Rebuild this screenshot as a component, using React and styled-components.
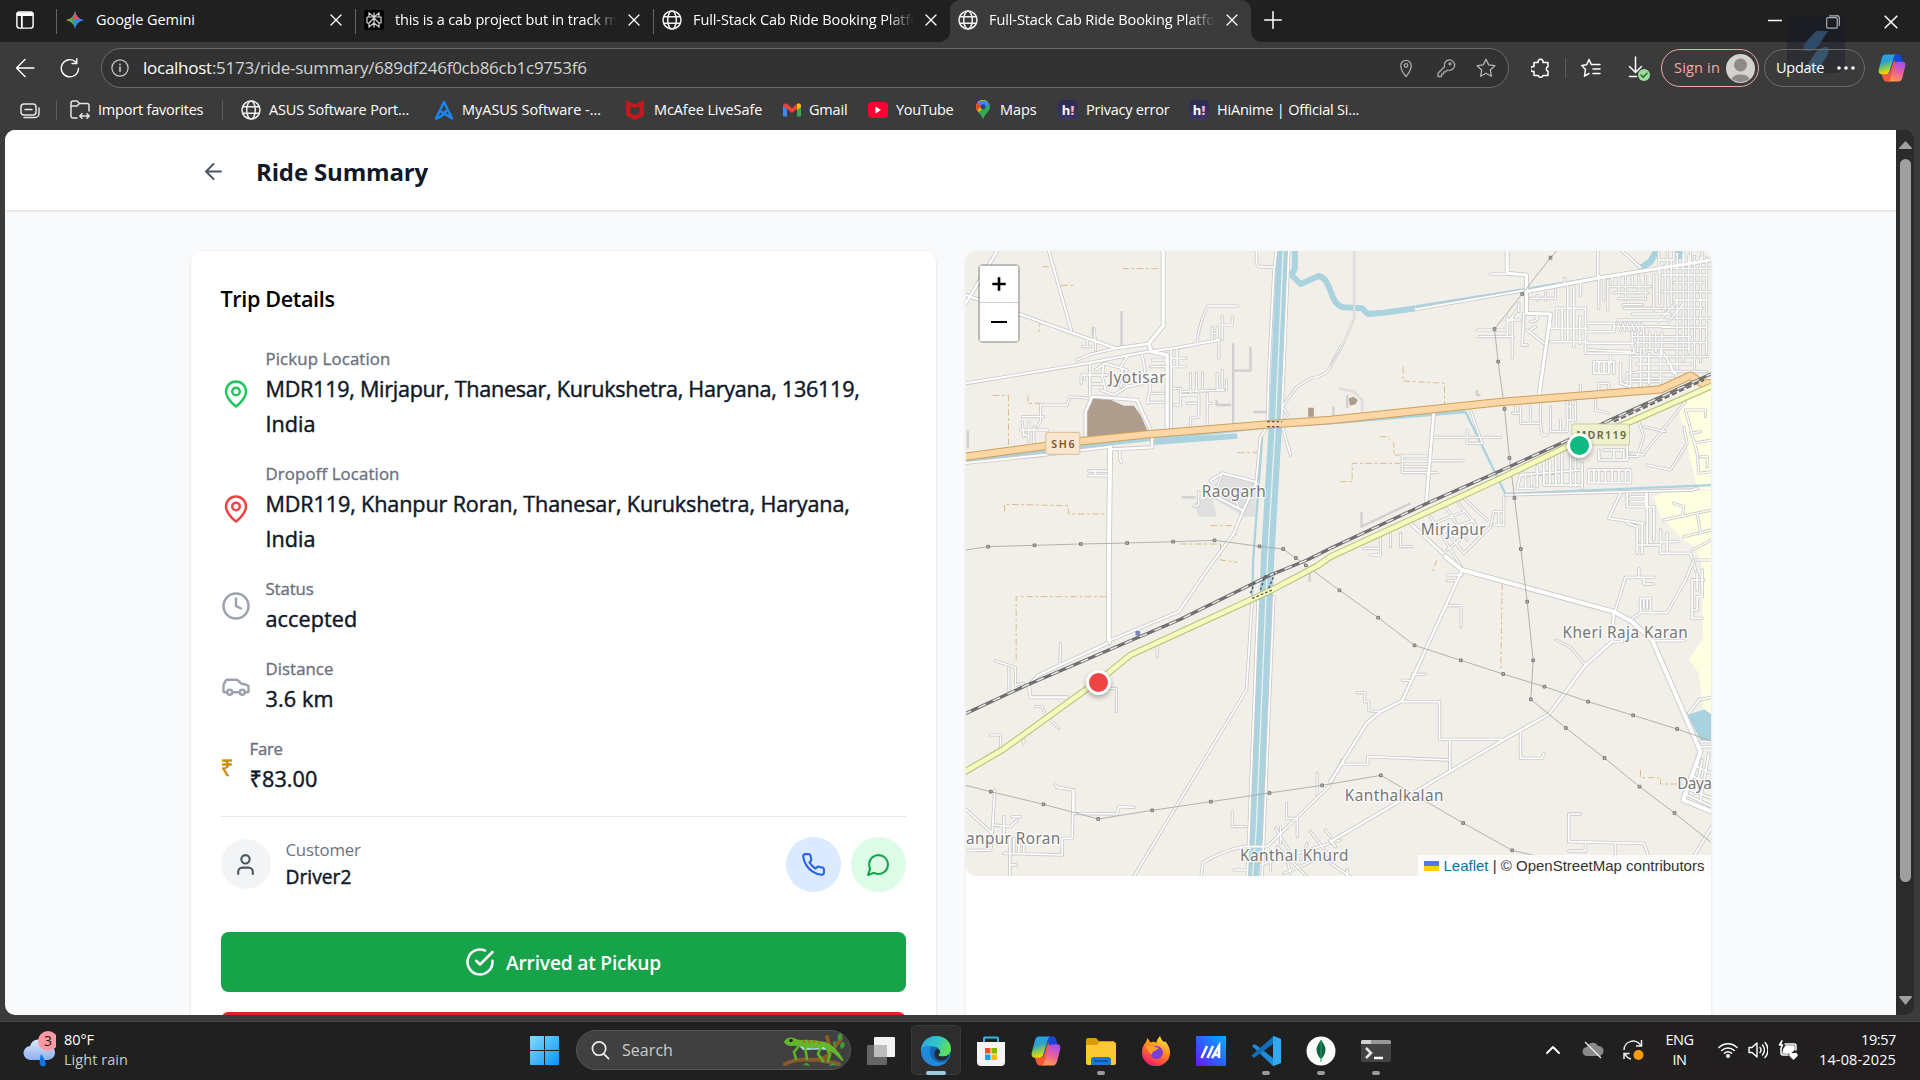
import React from "react";
import styled, { createGlobalStyle } from "styled-components";

const Global = createGlobalStyle`
  * { box-sizing: border-box; }
  html, body { margin: 0; padding: 0; overflow: hidden; }
  body { font-family: "Open Sans", "Noto Sans", sans-serif; background: #3b3b3b; }
  svg { display: block; flex: none; }
  h1, h2, p { margin: 0; }
`;

/* ---------- shared ---------- */

const T = styled.span`
  font-size: ${(p) => p.$s || 14.5}px;
  font-weight: ${(p) => p.$b || 400};
  color: ${(p) => p.$c || "#fff"};
  letter-spacing: ${(p) => p.$ls || 0}px;
  margin-bottom: ${(p) => (p.$mb === undefined ? 2 : p.$mb)}px;
  white-space: nowrap;
  flex: none;
`;

const Host = styled.span`
  color: #fff;
`;

const Gap = styled.i`
  flex: none;
  width: ${(p) => p.$w}px;
`;

const Stroke = ({ size = 20, w = 1.3, c = "#fff", box = 20, children }) => (
  <svg width={size} height={size} viewBox={`0 0 ${box} ${box}`} fill="none" stroke={c} strokeWidth={w} strokeLinecap="round" strokeLinejoin="round">
    {children}
  </svg>
);

const Globe = () => (
  <Stroke c="#f0f0f0" w={1.5}>
    <circle cx="10" cy="10" r="9" />
    <ellipse cx="10" cy="10" rx="4.3" ry="9" />
    <path d="M1.8 6.8h16.4M1.8 13.2h16.4" />
  </Stroke>
);

const Close = ({ size = 12 }) => (
  <Stroke size={size} box={12} w={1.3}>
    <path d="M1 1l10 10M11 1L1 11" />
  </Stroke>
);

const CopilotLogo = ({ size = 28, id }) => (
  <svg width={size} height={size} viewBox="0 0 28 28">
    <defs>
      <linearGradient id={id + "a"} x1="0" y1="0" x2="0.3" y2="1">
        <stop offset="0" stopColor="#1aa5f0" />
        <stop offset="0.45" stopColor="#2f9fd0" />
        <stop offset="0.7" stopColor="#7fc65a" />
        <stop offset="1" stopColor="#ffd400" />
      </linearGradient>
      <linearGradient id={id + "b"} x1="0.6" y1="0" x2="0.3" y2="1">
        <stop offset="0" stopColor="#a44df0" />
        <stop offset="0.5" stopColor="#e8609c" />
        <stop offset="1" stopColor="#ff9a4a" />
      </linearGradient>
    </defs>
    <path d="M16 0.5h4.5c1.8 0 2.5 1.5 3 3.2L24.8 8H19c-2 0-2.7 1-3.2 2.8L12 24l-2-5z" fill="#1a46d8" />
    <path d="M12 27.5H8c-1.8 0-2.5-1.5-3-3.2L3.4 20H9c2 0 2.7-1 3.2-2.8L16 6l2 4z" fill="#f25a38" />
    <path d="M7.5 0.5H18c-1.4.6-2 1.8-2.5 3.5l-4 13c-.6 2-1.5 3.2-3.6 3.2H3.5C.8 20.2.2 18 .8 15.5L3.5 5C4.2 2 5.2.5 7.5.5z" fill={`url(#${id}a)`} />
    <path d="M20.5 27.5H10c1.4-.6 2-1.8 2.5-3.5l4-13c.6-2 1.5-3.2 3.6-3.2h4.400c2.700 0 3.300 2.200 2.700 4.700L24.500 23c-.7 3-1.700 4.500-4 4.500z" fill={`url(#${id}b)`} />
  </svg>
);

/* ---------- browser chrome ---------- */

const Screen = styled.div`
  width: 1920px;
  height: 1080px;
  display: flex;
  flex-direction: column;
  background: #3b3b3b;
  overflow: hidden;
  position: relative;
`;

const TabStrip = styled.div`
  height: 42px;
  flex: none;
  display: flex;
  align-items: stretch;
  background: #202020;
`;

const StripCell = styled.div`
  width: ${(p) => p.$w}px;
  padding: ${(p) => p.$p || 0};
  flex: none;
  display: flex;
  align-items: center;
`;

const Tab = styled.div`
  width: ${(p) => p.$w || 298}px;
  flex: none;
  display: flex;
  align-items: center;
  padding: 0 ${(p) => (p.$active ? 13 : 13)}px 2px 8px;
  background: ${(p) => (p.$active ? "#3b3b3b" : "transparent")};
  border-radius: 10px 10px 0 0;
  gap: 11px;
  position: relative;
  ${(p) =>
    p.$active &&
    `&::before, &::after { content: ""; position: absolute; bottom: 0; width: 10px; height: 10px; }
     &::before { left: -10px; background: radial-gradient(circle at 0 0, transparent 9.5px, #3b3b3b 10px); }
     &::after { right: -10px; background: radial-gradient(circle at 100% 0, transparent 9.5px, #3b3b3b 10px); }`}
`;

const TabTitle = styled.div`
  flex: 1;
  min-width: 0;
  overflow: hidden;
  display: flex;
  mask-image: ${(p) => (p.$fade ? "linear-gradient(90deg, #000 calc(100% - 26px), transparent)" : "none")};
`;

const VRule = styled.div`
  width: 1px;
  flex: none;
  height: ${(p) => p.$h || 25}px;
  align-self: center;
  background: ${(p) => p.$c || "#666"};
`;

const Toolbar = styled.div`
  height: 52px;
  flex: none;
  display: flex;
  align-items: center;
  padding-left: 15px;
  position: relative;
  z-index: 1;
`;

const AddressBar = styled.div`
  width: 1408px;
  height: 40px;
  flex: none;
  display: flex;
  align-items: center;
  padding: 0 12px 0 9px;
  border: 1.25px solid #6c6c6c;
  border-radius: 20px;
  background: #323232;
`;

const Grow = styled.div`
  flex: 1;
`;

const Pill = styled.div`
  height: 38px;
  width: ${(p) => p.$w}px;
  flex: none;
  display: flex;
  align-items: center;
  padding: ${(p) => p.$p};
  border: ${(p) => p.$bw || 1}px solid ${(p) => p.$c};
  border-radius: 19px;
`;

const Bookmarks = styled.div`
  height: 36px;
  flex: none;
  display: flex;
  align-items: center;
  padding: 0 0 4px 20px;
`;

const Mark = styled.div`
  display: flex;
  align-items: center;
  gap: ${(p) => p.$g || 8}px;
  width: ${(p) => p.$w}px;
  flex: none;
`;

const HiBadge = styled.div`
  width: 20px;
  height: 20px;
  border-radius: 5px;
  background: linear-gradient(#2b2a4e, #3a3768);
  display: flex;
  align-items: center;
  justify-content: center;
  font: 700 13px/1 "Open Sans", sans-serif;
  color: #fff;
  b { color: #f5b6dc; }
`;

const Floating = styled.div`
  position: absolute;
  left: 1787px;
  top: 15px;
  width: 58px;
  height: 58px;
  border-radius: 10px;
  background: rgba(20, 25, 42, 0.36);
`;

const Viewport = styled.div`
  height: 885px;
  flex: none;
  margin: 0 6px 6px 5px;
  display: flex;
  border-radius: 10px;
  overflow: hidden;
  background: #2b2b2b;
`;

const ScrollTrack = styled.div`
  width: 18px;
  display: flex;
  flex-direction: column;
  align-items: center;
  padding-top: 11px;
  background: #2b2b2b;
`;

const Thumb = styled.div`
  width: 11px;
  height: 723px;
  margin: 10px 0 114px;
  border-radius: 6px;
  background: #9f9f9f;
`;

/* ---------- page ---------- */

const Page = styled.div`
  width: 1891px;
  height: 885px;
  overflow: hidden;
  background: #f9fafb;
`;

const PageHeader = styled.header`
  height: 80px;
  display: flex;
  align-items: center;
  padding: 2px 0 0 200px;
  gap: 34px;
  background: #fff;
  box-shadow: 0 1.25px 2.5px rgba(0, 0, 0, 0.14);
  position: relative;
`;

const Title = styled.h1`
  font-size: 24px;
  line-height: 35px;
  font-weight: 700;
  color: #111827;
  letter-spacing: ${(p) => p.$ls || 0}px;
`;

const Columns = styled.main`
  display: grid;
  grid-template-columns: 745px 745px;
  gap: 30px;
  padding: 41px 0 0 185.5px;
  height: 900px;
`;

const Card = styled.section`
  background: #fff;
  border-radius: 10px;
  box-shadow: 0 1.25px 3px rgba(0, 0, 0, 0.12);
  padding: ${(p) => p.$p || 0};
  min-width: 0;
`;

const Heading = styled.h2`
  font-size: 21.6px;
  line-height: 35px;
  font-weight: 600;
  color: #000;
  letter-spacing: ${(p) => p.$ls || 0}px;
  margin-bottom: 30px;
`;

const Details = styled.div`
  display: flex;
  flex-direction: column;
  gap: 20px;
  padding-bottom: 20px;
  border-bottom: 1px solid #e5e7eb;
`;

const Detail = styled.div`
  display: flex;
  align-items: center;
  gap: 15px;
`;

const Caption = styled.p`
  font-size: 16.8px;
  line-height: 24px;
  padding-top: 1px;
  color: #6b7280;
  letter-spacing: ${(p) => p.$ls || 0}px;
  -webkit-text-stroke: ${(p) => (p.$light ? 0 : 0.35)}px #6b7280;
`;

const Value = styled.p`
  font-size: ${(p) => p.$s || 21.6}px;
  line-height: ${(p) => p.$lh || 35}px;
  color: #111827;
  letter-spacing: ${(p) => p.$ls || 0}px;
  white-space: nowrap;
  -webkit-text-stroke: 0.45px #111827;
`;

const Rupee = styled.span`
  width: 14px;
  font-size: 23px;
  line-height: 35px;
  padding-top: 2px;
  color: #ca8a04;
  -webkit-text-stroke: 0.4px #ca8a04;
`;

const Person = styled.div`
  display: flex;
  align-items: center;
  height: 95px;
  padding-bottom: 1px;
`;

const Round = styled.div`
  width: ${(p) => p.$d}px;
  height: ${(p) => p.$d}px;
  flex: none;
  border-radius: 50%;
  display: flex;
  align-items: center;
  justify-content: center;
  margin-left: ${(p) => p.$ml || 0}px;
  background: ${(p) => p.$bg};
`;

const PersonText = styled.div`
  flex: 1;
  padding: 1px 0 0 15px;
`;

const Action = styled.div`
  height: 60px;
  display: flex;
  align-items: center;
  justify-content: center;
  gap: 11px;
  margin-top: 20px;
  border-radius: 7.5px;
  background: ${(p) => p.$bg};
`;

const MapFrame = styled.div`
  height: 625px;
  border-radius: 10px;
  overflow: hidden;
  position: relative;
  background: #f2efe9;
`;

const ZoomBox = styled.div`
  position: absolute;
  left: 12.5px;
  top: 12.5px;
  width: 42px;
  border: 2.5px solid rgba(0, 0, 0, 0.22);
  border-radius: 5px;
  background-clip: padding-box;
`;

const ZoomButton = styled.div`
  height: 37.5px;
  display: flex;
  align-items: center;
  justify-content: center;
  background: #fff;
  border-bottom: ${(p) => (p.$line ? "1px solid #ccc" : 0)};
`;

const Dot = styled.div`
  position: absolute;
  left: ${(p) => p.$x}px;
  top: ${(p) => p.$y}px;
  width: 25px;
  height: 25px;
  margin: -12.5px;
  border-radius: 50%;
  border: 3px solid #fff;
  background: ${(p) => p.$c};
  box-shadow: 0 2.5px 5px rgba(0, 0, 0, 0.3);
`;

const Attribution = styled.div`
  position: absolute;
  right: 0;
  bottom: 0;
  width: 293px;
  height: 21px;
  padding-left: 6px;
  display: flex;
  align-items: center;
  gap: 5px;
  font: 15px/21px "Liberation Sans", Arial, sans-serif;
  color: #333;
  background: rgba(255, 255, 255, 0.8);
  white-space: nowrap;
  b { font-weight: 400; color: #0078a8; }
`;

const Flag = styled.span`
  width: 15px;
  height: 10px;
  background: linear-gradient(#4c7be1 50%, #ffd500 50%);
`;

/* ---------- map data: [fill width, path] ---------- */

const roads = {
  nw: [
    [10, "M608 30V258L565 310L572 335L620 345V578"],
    [6, "M16 430L380 370L560 335L640 325L775 300"],
    [7, "M16 165L465 325L560 312"],
    [6, "M265 33L332 270"], [7, "M110 33L16 190"],
    [5, "M350 360L390 343L465 325"],
    [7, "M375 590V515L395 470L530 480L545 515L575 580V622L450 628"],
    [6, "M16 669L240 646L450 620"],
    [12, "M449 622L445 960V1208"],
    [4, "M710 310Q712 270 728 230L742 198H832"],
    [4, "M755 298V262M770 298V262M755 280H770M785 298V230M785 255H815V230M775 300V355"],
    [5, "M388 370V470M388 405H440M388 432H430M405 390L435 370L500 390L480 440M420 450L460 465L500 440M545 345L555 400L570 440L560 490M500 440L545 430M500 440L480 380L500 350M430 370L425 410L435 450"],
    [4, "M575 360H615M570 380H620M570 460H610M560 487H610M380 320V300M365 320H390M405 330V305L400 265"],
    [4, "M362 405V430M362 405H385M372 418V405"],
    [4, "M320 495L328 470L385 475M320 495H240V545L230 560M180 570H262M185 530H250M185 545L190 590M205 545V605M220 560V610M188 580L205 590"],
    [5, "M632 330V575M632 355H675M632 380H675M650 380V330"],
    [4, "M632 445H660V495H640M660 465H715V530L690 535V575M690 460V400M708 455V400M726 455V400M660 455L790 450M770 450V400M785 450V390M798 450V420M740 460V560M740 490H752M680 490H715"],
    [5, "M947 33L940 100L925 390L920 560L900 590L887 725M888 33V70L895 80L940 82"],
    [5, "M985 33L963 550L970 575L990 645"],
    [4, "M963 550L985 530L965 500L1010 440L1050 415Q1095 410 1110 380L1140 320"],
    [6, "M750 722L785 700L888 726L848 812L815 795L755 765L735 760M848 812L820 880L740 990L655 1115L440 1205"],
    [4, "M750 722L770 750L860 765M785 700L770 745M820 760L835 805M700 800L715 795V755"],
    [5, "M385 693H445M385 707H440M403 693V707M478 628V655L483 668"],
  ],
  ne: [
    [9, "M530 33V100L588 105V220L660 222L655 260L625 470"],
    [9, "M585 155L800 115L1143 60"],
    [5, "M255 208L590 150"], [5, "M802 33V115M875 33L930 82"],
    [5, "M580 220L575 315H590M590 270L640 310M600 245Q625 245 620 225M600 270L615 260"],
    [5, "M660 222V265H770M678 205V265M695 205V300M712 140V300M730 205V320M748 230V310M765 205V340M678 205H765M660 305H770M730 140V205M750 130V165"],
    [5, "M770 250H850V275H770M770 340H910V325M770 330L900 335M770 310L910 310"],
    [8, "M310 515L287 790"],
    [7, "M240 850L385 985"],
    [4, "M310 592H510M410 570V610H455M420 510L455 610M215 645V698M215 648H290M215 663H290M215 680H290M215 698H320M300 662H398"],
    [4, "M300 830L395 985M345 800L410 900M380 785L440 860M400 775L470 840M345 870L400 940L480 860L490 815H520M490 855H520V770M320 880L430 840M310 850L400 815M350 930L410 880M505 855V815M100 925H150V945H120M150 890V945M180 880V920M210 880V920H245"],
    [4, "M545 520H570V550H630V490M555 500V520M570 500V550M600 500V550M660 500V575H710V485M690 540V575M735 485V540H710M710 500H735M720 485V540M630 550L635 585H650M795 475V510L835 520M805 430V455M805 430H835V450M750 435V470"],
    [5, "M560 745L570 705L755 690M585 745V700M603 735V700M620 740V680M640 735V650M658 735V660M676 735V650M694 735V640M720 740V640M735 740V650M755 745V670M565 745H610M640 735H755"],
    [5, "M775 690H900V728H775ZM790 690V728M805 690V728M825 690V728M845 690V728M865 690V728M885 690V728M805 630V660H890V615M820 630H880V660M850 630V660"],
    [4, "M925 545L940 590L920 650H890M940 560L1005 575M1065 485L940 640M1070 610L1020 690L950 675M1060 560L1070 610M900 640L940 645"],
    [5, "M525 765L1085 750L1100 745M870 760L835 835L940 850M890 760V800H945V760M900 770H945M900 785H945M950 760V910M935 850V940M950 800H970V900M990 870V940H1080L1095 990M920 860V940M920 915H990M990 905H1040M1010 880V940M890 850L920 860"],
    [4, "M1065 510H1125V530M1065 510L1100 640L1105 700L1143 695M1080 580L1110 575M1090 610L1143 600M1110 650H1130V680M1000 840L1143 810M1030 790L1060 800L1055 830M1100 820L1110 880M1060 890L1143 870M1085 930L1143 900M1100 960H1143"],
    [5, "M790 365V400H830M790 365H850V400M805 365V395M820 365V395M835 365V400M840 345V370M870 370V430L900 440M900 350V445M930 330V440M955 340V430M990 330V430M1000 340L1040 410M1020 380L1030 400"],
    [4, "M440 270H525M445 290H550M530 230V290M545 230V355M530 240H570M565 190V215M530 250L560 210M600 175H675V150M620 165V180M645 160V180M480 102H530M703 115V130"],
  ],
  sw: [
    [7, "M440 250L235 345L205 375L210 412H320"],
    [4, "M105 303L165 322V375L190 370M145 322V392M300 250L298 315M225 440H245L255 465L295 505M90 525H120V565M190 530V550M590 260V290M445 385H468V455"],
    [5, "M875 120L858 390L520 950"],
    [5, "M893 120L860 950M940 110L905 950"],
    [5, "M18 750L95 820L103 690M100 795L150 800L170 780M340 760L470 762L475 740L520 742M340 760V690L290 682L285 675M338 690L335 835H305V885L130 880M18 872L90 870L95 840M148 950V830M130 770V830M155 770H180M160 835V880M175 840V880M190 850V880M148 915H168"],
    [5, "M722 950L727 908Q790 870 850 860L920 860L1105 680L1145 600"],
    [4, "M815 755V800H855M825 800H830M978 730V775H1010V830M960 800V850M945 805L985 870M900 915L1140 840M950 860L1040 950M975 880L990 940M1050 815L1100 880L1110 900M1040 850L1020 900M1095 810L1110 830M930 870V930M970 940L1110 880M1070 640V705M820 930H860"],
  ],
  se: [
    [12, "M345 -10L395 30L850 155L905 185L965 240L1110 575L1058 720L1143 755"],
    [7, "M395 30L215 422L150 455L108 490L0 665"],
    [7, "M850 155L845 245L765 315L655 463L515 542L0 845"],
    [5, "M215 425H327V538H515M33 613H112V590L358 600M358 540V632M570 517V595H635L640 580"],
    [4, "M350 45H395M350 62H375M350 137H392V200M215 360L240 362M245 343H285M80 398H103V425H115V452L150 455M677 240L720 262L765 315"],
    [5, "M855 150L885 52H970M925 25V52M940 55V72H968M905 175L930 158H1010L1065 60L1090 0M1085 60V175H1115M1085 60H1120M1085 150H1100V110H1115V30M1100 40V90M930 155V115H960V158M940 120V145M950 120V145M975 242H1062M845 245H875V235M1075 460L1105 420L1143 412"],
    [5, "M1143 545H1110M1143 560H1110M1100 620L1143 640M1090 650L1143 670M1080 690L1143 715M1115 600L1095 700M1135 580L1110 720M1060 700L1143 740"],
    [5, "M750 762H715V845L940 850L958 900L990 945M765 850V873H715M855 850V900M0 910L60 950M50 930V950M0 840L15 860"],
    [6, "M1143 800L1055 950"],
  ],
};

/* streets of the dense town quarter in the north-east corner */
const town = [];
[140, 158, 176, 194].forEach((y, i) => town.push([4, `M${835 + i * 14} ${y}H${960 - i * 8}`]));
[845, 865, 885, 905, 925, 945].forEach((x, i) => town.push([4, `M${x} 108V${135 + (i % 3) * 22}`]));
[[805, 105, 205], [820, 110, 180], [832, 120, 210]].forEach(([x, a, b]) => town.push([4, `M${x} ${a}V${b}`]));
[862, 876, 890, 904, 918, 932].forEach((x) => town.push([4, `M${x} 250L${x + 8} 272`]));
town.push([4, "M850 260H1020M860 240H1010M905 222H1020M880 205H990"]);
[970, 988, 1004, 1022].forEach((x, i) => town.push([4, `M${x} ${105 - i * 15}V${210 - (i % 2) * 20}`]));
[905, 922, 940, 958, 976, 994].forEach((x, i) => town.push([4, `M${x} 275V${325 + (i % 3) * 10}`]));
[290, 308, 326, 350, 372, 395, 415].forEach((y, i) => town.push([4, `M${905 + (i % 3) * 12} ${y}H${1080 + (i % 2) * 50}`]));
[1040, 1058, 1075, 1092, 1110, 1128].forEach((x, i) => town.push([4, `M${x} ${40 + i * 3}V${390 - (i % 3) * 25}`]));
[85, 105, 128, 155, 180, 205, 235, 262].forEach((y, i) => town.push([4, `M${1030 - (i % 2) * 35} ${y}H${1143 - (i % 3) * 14}`]));
town.push([4, "M1015 245L1055 195M985 245L1040 185M985 60H1030V33M985 33V100M1010 33V85M1060 33V70M1080 33V70M1115 33V65M880 425H990M890 435V400L930 395"]);

const quadrants = [
  ["", roads.nw],
  ["translate(1110 0)", [...town, ...roads.ne]],
  ["translate(0 960)", roads.sw],
  ["translate(1110 960)", roads.se],
];

const tracks = [
  "M245 80H270M485 86H598M302 136H340M240 240L235 278M97 466H144V620M202 466V490H240M832 638H890M132 815V793L322 797L325 822H440M750 857H820M815 883H830M660 912H780M780 912V960L830 967",
  "M1328 380V423L1452 430V495M1258 590H1280L1300 610V645H1320M1138 725H1175V670H1325M1428 960L1415 1000",
  "M167 1260V1070L440 1070M1625 1030L1621 1285M2040 1590V1613H2100V1632H2165",
];

const SH6 = "M16 650L365 603L560 583L925 553L1110 540L1610 487L2100 448L2190 407L2225 430L2260 430";
const MDR = "M10 1597L125 1530L430 1310L510 1245L930 1052L1070 978L1110 950L1620 715L1830 615L2010 545L2260 435";
const RAIL = "M10 1423L200 1335L660 1138L930 1005L1040 960L1110 925L1400 790L1610 697L1830 597L1960 535L2260 398";

const power = [
  [[16, 930], [83, 920], [222, 916], [361, 912], [500, 909], [638, 905], [762, 901], [897, 919], [968, 927], [1006, 954], [1036, 976], [1137, 1051], [1253, 1133], [1362, 1216], [1501, 1261], [1628, 1302], [1752, 1340], [1883, 1385], [2018, 1426], [2150, 1467], [2258, 1505]],
  [[1788, 33], [1770, 53], [1685, 162], [1602, 267], [1613, 365], [1632, 507], [1647, 654], [1662, 774], [1681, 927], [1700, 1085], [1718, 1261], [1711, 1378], [1816, 1464], [1932, 1554], [2037, 1640], [2142, 1719], [2258, 1812]],
  [[16, 1636], [91, 1655], [249, 1693], [413, 1737], [575, 1711], [751, 1685], [927, 1659], [1085, 1636], [1261, 1606], [1508, 1749], [1655, 1831], [1760, 1856]],
];

const places = [
  ["Jyotisar", 532, 428, 170], ["Raogarh", 822, 772, 192], ["Mirjapur", 1480, 885, 194],
  ["Kheri Raja Karan", 1996, 1194, 376], ["Kanthalkalan", 1303, 1683, 296], ["Kanthal Khurd", 1003, 1862, 325],
  ["anpur Roran", 160, 1811, 283], ["Daya", 2204, 1646, 104],
];

const RideMap = () => (
  <svg width="745" height="625" viewBox="16.5 33 2235 1875" fill="none" strokeLinejoin="round">
    <rect width="2260" height="1920" fill="#f2efe9" />
    <path d="M2170 480L2260 435V750L2210 745L2155 510ZM2080 772L2110 757L2260 750V1420L2228 1412L2215 1300L2185 1258L2228 1195L2222 960L2200 920L2160 890L2100 830Z" fill="#feffe0" />
    <path d="M780 705L885 730V830H850L750 770ZM700 790L755 765L768 830H715Z" fill="#e0dfdf" />
    <path d="M400 467L440 475L490 497H520L540 525L562 575L378 592L375 515ZM1043 503H1060V530H1043ZM1165 475L1180 470L1192 480L1185 493L1168 497Z" fill="#ae9c8d" />
    <path d="M2180 1425L2232 1408L2260 1430V1505L2220 1500Z" fill="#aad3df" />
    <g stroke="#aad3df">
      <path d="M968 30L945 550L921 960L887 1770L876 1910" strokeWidth="40" />
      <path d="M1003 30V85L993 105L1020 132L1075 108C1115 115 1105 195 1150 202L1205 205L1222 222L1270 218L1365 205" strokeWidth="18" />
      <path d="M1365 200L1700 147L2040 92" strokeWidth="9" />
      <path d="M2040 85L2070 65L2090 30M2155 30V58" strokeWidth="20" />
      <path d="M16 662L440 612L930 560L1120 548L1515 515" strokeWidth="10" />
      <path d="M570 607L830 588" strokeWidth="17" />
      <path d="M1515 515L1600 690L1635 762L2260 735" strokeWidth="7" />
      <path d="M905 590L878 960L875 1080" strokeWidth="7" />
    </g>
    <path d="M968 30L945 550L921 960L887 1770L876 1910" stroke="#e8efec" strokeWidth="4" />
    {tracks.map((d) => <path key={d} d={d} stroke="#d8bf8c" strokeWidth="3" strokeDasharray="20 8 8 8" />)}
    {quadrants.map(([t, list], q) => (
      <g key={q} transform={t}>
        <g stroke="#c9c9c9" strokeLinecap="round">{list.map(([w, d], i) => <path key={i} d={d} strokeWidth={w + 5} />)}</g>
        <g stroke="#fff" strokeLinecap="round">{list.map(([w, d], i) => <path key={i} d={d} strokeWidth={w} />)}</g>
      </g>
    ))}
    <g stroke="#cfcfcf" strokeWidth="7">
      <path d="M1181 30V235L1145 320L1110 380M483 213V318M397 262V290M818 310V560M820 392H870V320M768 480V495H812M878 516H920M663 772H705M22 572V625M1203 815V860L1350 790M1135 445L1180 455L1205 480V515M1160 505V465M1119 500V530M1549 450V465H1560M1047 980V1025" />
      <path d="M1181 30V235L1145 320L1110 380M1135 445L1180 455L1205 480V515" stroke="#f4f4f4" strokeWidth="2.5" />
    </g>
    {power.map((line, i) => (
      <g key={i}>
        <polyline points={line.join(" ")} stroke="#a5a5a2" strokeWidth="2.5" />
        {line.slice(1, -1).map(([x, y]) => <rect key={x} x={x - 4} y={y - 4} width="8" height="8" fill="#bbb" stroke="#777" strokeWidth="3" />)}
      </g>
    ))}
    <path d={SH6} stroke="#caa15e" strokeWidth="25" />
    <path d={SH6} stroke="#fcd6a4" strokeWidth="19" />
    <path d={RAIL} stroke="#707070" strokeWidth="10" />
    <path d={RAIL} stroke="#e6e6e6" strokeWidth="4.5" strokeDasharray="24 24" />
    <path d="M1960 545L2230 420" stroke="#666" strokeWidth="6" strokeDasharray="16 8" />
    <path d={MDR} stroke="#b9bd78" strokeWidth="20" />
    <path d={MDR} stroke="#f7fabf" strokeWidth="14" />
    <path d="M870 1060L885 1020M900 1050L915 1005M925 1045L945 995M875 1075L940 1048M920 545H965M920 560H960" stroke="#555" strokeWidth="4" strokeDasharray="8 6" />
    <path d="M525 1173H539V1187H525Z" fill="#7d86b5" />
    <g fontFamily="'Noto Sans', sans-serif" fontSize="46" textAnchor="middle" fill="#777" stroke="#fff" strokeWidth="8" paintOrder="stroke">
      {places.map(([n, x, y, w]) => <text key={n} x={x - 2} y={y} textLength={w} strokeOpacity="0.75">{n}</text>)}
    </g>
    <rect x="256" y="577" width="102" height="66" rx="6" fill="#f8e6cf" stroke="#dcbb92" strokeWidth="3" />
    <rect x="1834" y="552" width="173" height="63" rx="6" fill="#eff0cf" stroke="#c9cc98" strokeWidth="3" />
    <g fontFamily="'Noto Sans', sans-serif" fontSize="32" fontWeight="600" textAnchor="middle">
      <text x="307" y="625" textLength="70" fill="#7c5429">SH6</text>
      <text x="1922" y="597" textLength="150" fill="#65693c">MDR119</text>
    </g>
  </svg>
);

/* ---------- taskbar ---------- */

const Taskbar = styled.div`
  height: 59px;
  flex: none;
  display: flex;
  align-items: center;
  padding-bottom: 2px;
  background: linear-gradient(90deg, #202020 0 70%, #231f21);
  border-top: 1px solid #444;
`;

const Weather = styled.div`
  width: 530px;
  padding-left: 23px;
  display: flex;
  align-items: center;
  gap: 8px;
`;

const Stack = styled.div`
  display: flex;
  flex-direction: column;
  align-items: ${(p) => p.$a || "flex-start"};
  width: ${(p) => (p.$w ? p.$w + "px" : "auto")};
  line-height: 20px;
`;

const SearchBox = styled.div`
  width: 275px;
  height: 40px;
  margin: 0 4.5px 0 17px;
  padding: 0 3px 0 14px;
  display: flex;
  align-items: center;
  border: 1px solid #565656;
  border-radius: 20px;
  background: #404040;
`;

const AppSlot = styled.div`
  width: 50px;
  height: 50px;
  margin-right: 5px;
  flex: none;
  border-radius: 5px;
  display: flex;
  flex-direction: column;
  align-items: center;
  padding-top: 10px;
  gap: 5px;
  background: ${(p) => (p.$on ? "#2d2d2d" : "transparent")};
  border: 1px solid ${(p) => (p.$on ? "#393939" : "transparent")};
  &::after {
    content: "";
    flex: none;
    width: ${(p) => (p.$on ? 20 : p.$run ? 8 : 0)}px;
    height: 4px;
    border-radius: 2px;
    background: ${(p) => (p.$on ? "#9fc9dd" : "#9a9a9a")};
  }
`;

const Tray = styled.div`
  flex: 1;
  display: flex;
  align-items: center;
`;

const AppIcon = ({ children }) => <svg width="30" height="30" viewBox="0 0 30 30">{children}</svg>;

const Gecko = () => (
  <svg width="64" height="34" viewBox="0 0 64 34">
    <path d="M2 31Q14 25 28 27Q44 27 48 18L44 4M50 16L58 6M36 27L56 31" stroke="#8a5a2b" strokeWidth="4" fill="none" strokeLinecap="round" />
    <path d="M56 8Q52 2 58 0Q62 5 56 8ZM58 16Q55 9 61 9Q64 14 58 16ZM20 32Q24 27 27 33ZM46 33Q50 27 54 32ZM52 14Q47 8 53 8Z" fill="#3f9a3a" />
    <path d="M1 9Q4 3 11 5Q14 7 18 7Q28 6 42 9Q52 12 60 26Q62 31 56 25Q48 16 38 15L20 15Q14 12 9 13Q3 13 1 9Z" fill="#62b82a" />
    <path d="M16 13Q28 17 40 14L50 19Q44 16 38 16.500L20 17Z" fill="#a7dcf0" />
    <path d="M16 13L11 19L13 26M22 14L24 26M38 14L35 21L40 28M43 14L47 22L45 28" stroke="#5cb526" strokeWidth="2.6" fill="none" strokeLinecap="round" />
    <path d="M20 8.500h2M25 8.500h2M30 8.500h2M35 9.500h2" stroke="#d6502a" strokeWidth="2" />
    <circle cx="8" cy="7.500" r="1.800" fill="#222" />
  </svg>
);

const pin = <><path d="M20 10c0 6-8 12-8 12s-8-6-8-12a8 8 0 0 1 16 0Z" /><circle cx="12" cy="10" r="3" /></>;

const items = [
  { l: "Pickup Location", ls: 0.14, v: ["MDR119, Mirjapur, Thanesar, Kurukshetra, Haryana, 136119,", "India"], vs: [-0.28, 0], c: "#22c55e", icon: pin },
  { l: "Dropoff Location", ls: 0.13, v: ["MDR119, Khanpur Roran, Thanesar, Kurukshetra, Haryana,", "India"], vs: [-0.13, 0], c: "#ef4444", icon: pin },
  { l: "Status", ls: -0.1, v: ["accepted"], vs: [0.1], c: "#9ca3af", icon: <><circle cx="12" cy="12" r="10" /><path d="M12 6v6l4 2" /></> },
  { l: "Distance", ls: 0.06, v: ["3.6 km"], vs: [0.15], c: "#9ca3af", icon: <><path d="M19 17h2c.6 0 1-.4 1-1v-3c0-.9-.7-1.7-1.5-1.9C18.7 10.6 16 10 16 10s-1.3-1.4-2.2-2.3c-.5-.4-1.1-.7-1.8-.7H5c-.6 0-1.1.4-1.4.9l-1.4 2.9A3.7 3.7 0 0 0 2 12v4c0 .6.4 1 1 1h2" /><circle cx="7" cy="17" r="2" /><path d="M9 17h6" /><circle cx="17" cy="17" r="2" /></> },
];

export default function App() {
  return (
    <Screen>
      <Global />
      <TabStrip>
        <StripCell $w={56} $p="0 0 2px 16px">
          <Stroke size={18} w={1.6}><rect x="1" y="1" width="18" height="18" rx="3" /><path d="M2 4.5h16M6.500 6v12" strokeWidth="2" /><path d="M2 3h16" strokeWidth="3" /></Stroke>
        </StripCell>
        <VRule />
        <Tab>
          <svg width="20" height="20" viewBox="0 0 20 20">
            <defs><linearGradient id="gm" x1="0" y1="0.5" x2="1" y2="0.5"><stop offset="0" stopColor="#f9c20a" /><stop offset="0.35" stopColor="#39a96b" /><stop offset="0.55" stopColor="#3186ff" /><stop offset="1" stopColor="#3d8bff" /></linearGradient></defs>
            <path d="M10 1Q11.5 8.5 19 10Q11.5 11.5 10 19Q8.5 11.5 1 10Q8.5 8.5 10 1Z" fill="url(#gm)" />
            <path d="M10 1Q11.5 8.5 15 9L8 9Q9.5 6 10 1Z" fill="#f0504a" />
          </svg>
          <TabTitle><T $ls={-0.06}>Google Gemini</T></TabTitle>
          <Close />
        </Tab>
        <VRule />
        <Tab $w={297}>
          <svg width="20" height="20" viewBox="0 0 20 20"><rect width="20" height="20" rx="2" fill="#000" /><path d="M10 2.5v15M10 7L5 3v4M10 7l5-4v4M3 7h14v6h-2M3 7v6h2M10 8l-5 5v4l5-4M10 8l5 5v4l-5-4" stroke="#d8d8d8" strokeWidth="1.2" fill="none" /></svg>
          <TabTitle $fade><T $ls={-0.13}>this is a cab project but in track m</T></TabTitle>
          <Close />
        </Tab>
        <VRule />
        <Tab $w={296}>
          <Globe />
          <TabTitle $fade><T $ls={-0.09}>Full-Stack Cab Ride Booking Platfo</T></TabTitle>
          <Close />
        </Tab>
        <Tab $active $w={301}>
          <Globe />
          <TabTitle $fade><T $ls={-0.09}>Full-Stack Cab Ride Booking Platfo</T></TabTitle>
          <Close />
        </Tab>
        <StripCell $w={517} $p="0 0 2px 13px"><Stroke size={18} box={18} w={1.5}><path d="M9 .7v16.600M.7 9h16.600" /></Stroke></StripCell>
        <StripCell $w={58} $p="0"><Stroke size={14} box={14} w={1.3}><path d="M.5 6.500h13" /></Stroke></StripCell>
        <StripCell $w={58} $p="2px 0 0 0"><Stroke size={14} box={14} w={1.2}><rect x=".7" y="2.7" width="10.5" height="10.5" rx="1" /><path d="M3.500 .8h8a1.800 1.800 0 0 1 1.800 1.800v8" /></Stroke></StripCell>
        <StripCell $w={30} $p="2px 0 0 0"><Close size={14} /></StripCell>
      </TabStrip>

      <Toolbar>
        <Stroke w={1.4}><path d="M19 10H1.5M10 1.5L1.5 10l8.5 8.5" /></Stroke>
        <Gap $w={25} />
        <Stroke w={1.4}><path d="M18.5 10.5A8.6 8.6 0 1 1 16 4.2M16.8 .8v4.700H12" /></Stroke>
        <Gap $w={21} />
        <AddressBar>
          <Stroke size={18} c="#ccc" w={1.3}><circle cx="10" cy="10" r="9" /><path d="M10 9v5" strokeWidth="1.7" /><path d="M10 6v.1" strokeWidth="2" /></Stroke>
          <Gap $w={14} />
          <T $s={17} $c="#d2d2d2" $ls={-0.26}><Host>localhost</Host>:5173/ride-summary/689df246f0cb86cb1c9753f6</T>
          <Grow />
          <Stroke c="#aaa"><path d="M10 18.5C6 14 4.8 10.500 4.800 7.500a5.200 5.200 0 0 1 10.400 0c0 3-1.200 6.500-5.200 11z" /><circle cx="10" cy="7.5" r="1.8" /></Stroke>
          <Gap $w={20} />
          <Stroke c="#aaa"><path d="M8.5 8.800A5.200 5.200 0 1 1 11.500 12L9.500 13.800H7.600v2H5.700v2L5 18.500H2v-3.200z" /><circle cx="14" cy="5.8" r="1" /></Stroke>
          <Gap $w={20} />
          <Stroke c="#b5b5b5"><path d="M10 1.200l2.700 5.700 6.100.8-4.500 4.300 1.100 6.200L10 15.200l-5.400 3 1.100-6.200L1.200 7.700l6.100-.8z" /></Stroke>
        </AddressBar>
        <Gap $w={22} />
        <Stroke w={1.5}><path d="M3 4.500h4.200a2.500 2.500 0 1 1 4.800 0h5v4.200a2.400 2.400 0 0 0 0 4.600v4.200h-5a2.500 2.500 0 0 1-4.800 0H3v-4.200a2.500 2.500 0 1 1 0-4.600z" /></Stroke>
        <Gap $w={14} /><VRule $h={20} $c="#5c5c5c" /><Gap $w={15} />
        <Stroke w={1.5}><path d="M8 1.500l2.300 5h8.700M8 1.500L5.700 6.700.8 7.500l3.700 4-1 6.700L8 15.500M12 11h7M12 15.500h7" /></Stroke>
        <Gap $w={27} />
        <svg width="22" height="28" viewBox="0 0 22 28" fill="none" stroke="#fff" strokeWidth="1.5" strokeLinecap="round"><path d="M7.500 3v15M1.500 12.500l6 6 6-6M1.500 22.500h7" /><circle cx="16" cy="21" r="6" fill="#9fdc9c" stroke="none" /><path d="M13 21l2.200 2.200 3.800-4" stroke="#263" /></svg>
        <Gap $w={11} />
        <Pill $w={98} $bw={1.5} $c="#eea6a3" $p="0 3px 0 12px">
          <T $c="#f2aba8" $ls={0.18}>Sign in</T><Grow />
          <svg width="29" height="29" viewBox="0 0 29 29"><circle cx="14.5" cy="14.5" r="14.5" fill="#d4d2cf" /><circle cx="14.5" cy="11" r="6.500" fill="#8d8a87" /><path d="M5.500 25a9.500 6.500 0 0 1 18 0A14.500 14.500 0 0 1 5.500 25z" fill="#8d8a87" /></svg>
        </Pill>
        <Gap $w={5} />
        <Pill $w={101} $c="#6c6c6c" $p="0 9px 0 11px">
          <T $ls={-0.28}>Update</T><Grow />
          <svg width="18" height="4" viewBox="0 0 18 4" fill="#fff"><circle cx="2" cy="2" r="1.8" /><circle cx="9" cy="2" r="1.8" /><circle cx="16" cy="2" r="1.8" /></svg>
        </Pill>
        <Gap $w={13} />
        <CopilotLogo id="tb" />
      </Toolbar>

      <Bookmarks>
        <Stroke w={1.5} c="#e5e5e5"><rect x="1" y="4" width="15" height="11" rx="3" /><path d="M5 9.500h7M4 17.500h11a4 4 0 0 0 4-4V8" /></Stroke>
        <Gap $w={16} /><VRule $h={20} $c="#5c5c5c" /><Gap $w={13} />
        <Mark $w={152}>
          <Stroke w={1.5} c="#e5e5e5"><path d="M7 18H3a2 2 0 0 1-2-2V3a2 2 0 0 1 2-2h4l2.500 2.500H17a2 2 0 0 1 2 2V11M1 6h6l2.500-2.500M10 16h9M12 13.800L9.800 16l2.200 2.200M17 13.800l2.200 2.200-2.200 2.200" /></Stroke>
          <T $ls={-0.21}>Import favorites</T>
        </Mark>
        <VRule $h={20} $c="#5c5c5c" /><Gap $w={18} />
        <Mark $w={193}><Globe /><T $ls={-0.15}>ASUS Software Port...</T></Mark>
        <Mark $w={192}>
          <Stroke c="#1a86f5" w={2.4}><path d="M10 2L2 18.500Q8 17 12 11M10 2l8 16.500L7 11.500" /></Stroke>
          <T $ls={-0.03}>MyASUS Software -...</T>
        </Mark>
        <Mark $w={157} $g={10}>
          <svg width="18" height="20" viewBox="0 0 18 20"><path d="M0 0l9 4.500L18 0v15.500L9 20l-9-4.500z" fill="#c8161d" /><path d="M4.500 6L9 8.200 13.500 6v7L9 15.200 4.500 13z" fill="#3b3b3b" /></svg>
          <T $ls={-0.1}>McAfee LiveSafe</T>
        </Mark>
        <Mark $w={85}>
          <svg width="18" height="14" viewBox="0 0 18 14"><path d="M0 2v11.500h4V6z" fill="#4285f4" /><path d="M18 2v11.500h-4V6z" fill="#34a853" /><path d="M0 2.500Q.5-.5 4 .8L9 5l5-4.200Q17.500-.5 18 2.500L9 10z" fill="#ea4335" /><path d="M14 .8Q17.500-.5 18 2.500V4l-4 3z" fill="#fbbc04" /></svg>
          <T $ls={-0.2}>Gmail</T>
        </Mark>
        <Mark $w={108}>
          <svg width="20" height="16" viewBox="0 0 20 16"><rect width="20" height="16" rx="4" fill="#ff0033" /><path d="M7.500 4.500L13 8l-5.500 3.500z" fill="#fff" /></svg>
          <T $ls={-0.32}>YouTube</T>
        </Mark>
        <Mark $w={82} $g={10}>
          <svg width="14" height="20" viewBox="0 0 14 20"><path d="M7 20C6 14 0 12 0 7a7 7 0 0 1 14 0c0 5-6 7-7 13z" fill="#34a853" /><path d="M0 7a7 7 0 0 1 12-5L3 12Q0 9.500 0 7z" fill="#fbbc04" /><path d="M1.500 3A7 7 0 0 1 13.500 5L6 8z" fill="#4285f4" /><path d="M1.600 2.600L5 6 1 11Q-1 6 1.600 2.600z" fill="#ea4335" /><circle cx="7" cy="6.8" r="2.5" fill="#23477e" /></svg>
          <T $ls={-0.1}>Maps</T>
        </Mark>
        <Mark $w={131}><HiBadge>h<b>!</b></HiBadge><T $ls={-0.22}>Privacy error</T></Mark>
        <Mark $w={180}><HiBadge>h<b>!</b></HiBadge><T $ls={-0.2}>HiAnime | Official Si...</T></Mark>
      </Bookmarks>

      <Viewport>
        <Page>
          <PageHeader>
            <Stroke size={17} box={17} w={1.9} c="#4b5563"><path d="M16 8.500H1M8.500 1L1 8.500 8.500 16" /></Stroke>
            <Title $ls={-0.16}>Ride Summary</Title>
          </PageHeader>
          <Columns>
            <Card $p="30px">
              <Heading $ls={-0.37}>Trip Details</Heading>
              <Details>
                {items.map((it) => (
                  <Detail key={it.l}>
                    <Stroke size={30} box={24} w={2} c={it.c}>{it.icon}</Stroke>
                    <div>
                      <Caption $ls={it.ls}>{it.l}</Caption>
                      {it.v.map((v, i) => <Value key={v} $ls={it.vs[i]}>{v}</Value>)}
                    </div>
                  </Detail>
                ))}
                <Detail>
                  <Rupee>₹</Rupee>
                  <div><Caption $ls={-0.25}>Fare</Caption><Value $ls={0.1}>₹83.00</Value></div>
                </Detail>
              </Details>
              <Person>
                <Round $d={50} $bg="#f3f4f6"><Stroke size={25} box={24} w={2} c="#4b5563"><path d="M19 21v-2a4 4 0 0 0-4-4H9a4 4 0 0 0-4 4v2" /><circle cx="12" cy="7" r="4" /></Stroke></Round>
                <PersonText><Caption $light $ls={-0.2}>Customer</Caption><Value $s={19.2} $lh={30} $ls={0.03}>Driver2</Value></PersonText>
                <Round $d={55} $bg="#dbeafe"><Stroke size={25} box={24} w={2} c="#2563eb"><path d="M22 16.92v3a2 2 0 0 1-2.18 2 19.79 19.79 0 0 1-8.63-3.07 19.5 19.5 0 0 1-6-6 19.79 19.79 0 0 1-3.07-8.67A2 2 0 0 1 4.11 2h3a2 2 0 0 1 2 1.72 12.84 12.84 0 0 0 .7 2.81 2 2 0 0 1-.45 2.11L8.09 9.91a16 16 0 0 0 6 6l1.27-1.27a2 2 0 0 1 2.11-.45 12.84 12.84 0 0 0 2.81.7A2 2 0 0 1 22 16.92z" /></Stroke></Round>
                <Round $d={55} $ml={10} $bg="#dcfce7"><Stroke size={25} box={24} w={2} c="#16a34a"><path d="M7.9 20A9 9 0 1 0 4 16.1L2 22Z" /></Stroke></Round>
              </Person>
              <Action $bg="#16a34a">
                <Stroke size={30} box={24} w={2}><path d="M22 11.08V12a10 10 0 1 1-5.93-9.14" /><path d="M9 11l3 3L22 4" /></Stroke>
                <T $s={19.2} $b={600} $mb={0} $ls={-0.2}>Arrived at Pickup</T>
              </Action>
              <Action $bg="#dc2626" />
            </Card>
            <Card>
              <MapFrame>
                <RideMap />
                <Dot $x={614} $y={194.5} $c="#10b981" />
                <Dot $x={132.5} $y={431.5} $c="#ef4444" />
                <ZoomBox>
                  <ZoomButton $line><Stroke size={16} box={16} w={2.6} c="#000"><path d="M8 1.300v13.400M1.300 8h13.400" strokeLinecap="butt" /></Stroke></ZoomButton>
                  <ZoomButton><Stroke size={16} box={16} w={2.2} c="#000"><path d="M0 8h16" strokeLinecap="butt" /></Stroke></ZoomButton>
                </ZoomBox>
                <Attribution><Flag /><span><b>Leaflet</b> | © OpenStreetMap contributors</span></Attribution>
              </MapFrame>
            </Card>
          </Columns>
        </Page>
        <ScrollTrack>
          <svg width="13" height="8" viewBox="0 0 13 8"><path d="M6.500 0L13 7q0 1-1 1H1Q0 8 0 7z" fill="#9f9f9f" /></svg>
          <Thumb />
          <svg width="13" height="9" viewBox="0 0 13 9"><path d="M6.500 9L0 1q0-1 1-1h11q1 0 1 1z" fill="#9f9f9f" /></svg>
        </ScrollTrack>
      </Viewport>

      <Taskbar>
        <Weather>
          <svg width="33" height="38" viewBox="0 0 33 38">
            <defs><linearGradient id="cl" x1="0" y1="0" x2="0" y2="1"><stop offset="0" stopColor="#dbe8fb" /><stop offset="1" stopColor="#8fb0ee" /></linearGradient></defs>
            <path d="M8 29a7 7 0 0 1-1-14 9 9 0 0 1 17-1 7.500 7.500 0 0 1 1 15z" fill="url(#cl)" />
            <path d="M18 23q6 8 4.500 11.500a4 4 0 0 1-5.500-1q-1-3 1-10.500z" fill="#1573e8" />
            <circle cx="25" cy="10" r="10" fill="#ff99a4" />
            <text x="25" y="15" fontSize="14" textAnchor="middle" fill="#1a1a1a">3</text>
          </svg>
          <Stack><T $mb={0} $ls={-0.07}>80°F</T><T $mb={0} $c="#c8c8c8" $ls={0.05}>Light rain</T></Stack>
        </Weather>
        <svg width="29" height="29" viewBox="0 0 29 29">
          <defs><linearGradient id="wn" x1="0" y1="0" x2="1" y2="1"><stop offset="0" stopColor="#7fdcff" /><stop offset="1" stopColor="#0a94f5" /></linearGradient></defs>
          <path d="M1 0h13v14H0V1q0-1 1-1zM15 0h13q1 0 1 1v13H15zM0 15h14v14H1q-1 0-1-1zM15 15h14v13q0 1-1 1H15z" fill="url(#wn)" />
        </svg>
        <SearchBox>
          <Stroke size={19} w={1.8} c="#eee"><circle cx="8.5" cy="8" r="7" /><path d="M13.500 13.500l5 5" /></Stroke>
          <Gap $w={12} />
          <T $s={16} $mb={0} $c="#ccc" $ls={0.05}>Search</T><Grow /><Gecko />
        </SearchBox>
        <AppSlot><AppIcon><rect x="1" y="9" width="20" height="20" rx="1" fill="#666" /><rect x="8" y="1" width="21" height="20" rx="1" fill="#f2f2f2" /><rect x="8" y="9" width="13" height="12" fill="#bdbdbd" /></AppIcon></AppSlot>
        <AppSlot $on>
          <AppIcon>
            <defs><linearGradient id="eg" x1="0" y1="0" x2="1" y2="0.3"><stop offset="0" stopColor="#2aa6e8" /><stop offset="0.6" stopColor="#32c8c4" /><stop offset="1" stopColor="#5fe05a" /></linearGradient></defs>
            <circle cx="15" cy="15" r="15" fill="#1467b8" />
            <path d="M0 13C1 5 7.500 0 15 0c9 0 15 6 15 12.500C30 18 26 20.500 21.500 20.500c-3 0-4.500-1-4-2 2.500-3 .5-8-5-8C6 10.500 1 13 0 15z" fill="url(#eg)" />
            <path d="M0 14C2 10 7 9 11 10.500 8 13 8 19 12 23.500c4 4 10 4 14.500 1.500C23 29 19 30 15 30 6 30 0 23 0 14z" fill="#2388d8" />
            <path d="M17.500 18.500c-.5 1 1 2 4 2 3 0 5-.8 6.500-2-1 4-4.500 6.500-9 6-6-.8-7.500-8-3-12 3.500 1 4 4 1.500 6z" fill="#232b33" />
          </AppIcon>
        </AppSlot>
        <AppSlot><AppIcon><path d="M8 7V2.500Q8 1.500 9 1.500h12q1 0 1 1V7" fill="none" stroke="#35b6e8" strokeWidth="2" /><path d="M1 6h28v20q0 4-4 4H5q-4 0-4-4z" fill="#f4f4f4" /><path d="M9 12h5.500v5.500H9z" fill="#f25022" /><path d="M15.500 12H21v5.500h-5.500z" fill="#7fba00" /><path d="M9 18.500h5.500V24H9z" fill="#00a4ef" /><path d="M15.500 18.500H21V24h-5.500z" fill="#ffb900" /></AppIcon></AppSlot>
        <AppSlot><CopilotLogo size={30} id="tk" /></AppSlot>
        <AppSlot $run><AppIcon><path d="M0 4q0-2 2-2h8l3 3h15v8H0z" fill="#d99a0b" /><path d="M0 9h11l3-3h14q2 0 2 2v19q0 2-2 2H2q-2 0-2-2z" fill="#fcc934" /><path d="M5 29v-5q0-3 3-3h14q3 0 3 3v5z" fill="#1a78cc" /><path d="M8 25h14" stroke="#0b4e8c" strokeWidth="1.5" /></AppIcon></AppSlot>
        <AppSlot>
          <AppIcon>
            <defs><linearGradient id="ff" x1="0.8" y1="0" x2="0.3" y2="1"><stop offset="0" stopColor="#fff04a" /><stop offset="0.45" stopColor="#ff8a1e" /><stop offset="1" stopColor="#f5156c" /></linearGradient></defs>
            <path d="M1 17Q1 10 5 6l1.500-4 3 4.500Q13 5 15 7 16 3 19 0q1 4 4 6l1.500-.5Q29 11 29 16.500A14 13.500 0 0 1 1 17z" fill="url(#ff)" />
            <circle cx="15.5" cy="16.5" r="6.5" fill="#7b3fd6" /><path d="M5 10q5-2 9 1l4 1-4 3q-3 0-3 4-4-3-6-9z" fill="#ffa02b" />
          </AppIcon>
        </AppSlot>
        <AppSlot>
          <AppIcon>
            <defs><linearGradient id="ma" x1="0" y1="1" x2="1" y2="0"><stop offset="0" stopColor="#6a14ff" /><stop offset="0.5" stopColor="#2b63ff" /><stop offset="1" stopColor="#05b0ff" /></linearGradient></defs>
            <rect width="30" height="30" fill="url(#ma)" /><path d="M5.500 22L11 10M11.500 22L17 10M16 22l7-12v12M19 19h4" stroke="#fff" strokeWidth="2.6" fill="none" />
          </AppIcon>
        </AppSlot>
        <AppSlot $run><AppIcon><path d="M22 0l8 3v24l-8 3L3 12 1 10.500 3 8l3 1.500L22 22z" fill="#1f8ad6" /><path d="M22 0v30l8-3V3z" fill="#35a8f2" /><path d="M22 8L3 22l-2.500-2.500L22 .5z" fill="#0f6fb8" /></AppIcon></AppSlot>
        <AppSlot $run><AppIcon><circle cx="15" cy="15" r="14.5" fill="#fafafa" /><path d="M15 4q6 7 4 13-1.500 4-4 6-2.500-2-4-6Q9 11 15 4z" fill="#116149" /><path d="M15 4v22" stroke="#23a35a" strokeWidth="1" /></AppIcon></AppSlot>
        <AppSlot $run><AppIcon><rect y="4" width="30" height="22" rx="2" fill="#434343" /><path d="M0 6q0-2 2-2h26q2 0 2 2v2H0z" fill="#999" /><path d="M0 6q0-2 2-2h8v4H0z" fill="#d0d0d0" /><path d="M5 12l5 5-5 5" stroke="#e6e6e6" strokeWidth="2.5" fill="none" /><path d="M13 22h9" stroke="#fff" strokeWidth="2.5" /></AppIcon></AppSlot>
        <Tray>
          <Gap $w={140} />
          <Stroke size={14} box={14} w={1.9}><path d="M1 10l6-6 6 6" /></Stroke>
          <Gap $w={22} />
          <svg width="22" height="18" viewBox="0 0 22 18"><path d="M5 15a4.500 4.500 0 0 1 0-9 6 6 0 0 1 11-1 5 5 0 0 1 1 10z" fill="#8a8a8a" /><path d="M3 1l16 16" stroke="#eee" strokeWidth="1.3" /></svg>
          <Gap $w={19} />
          <svg width="21" height="22" viewBox="0 0 21 22" fill="none" stroke="#eee" strokeWidth="1.5"><path d="M1 11a9 9 0 0 1 17-4M18.500 1v6H13M8 20a9 9 0 0 1-6-5M1 20v-5.500h5.500" /><circle cx="15.5" cy="16" r="5" fill="#ff9a0a" stroke="none" /></svg>
          <Gap $w={18} />
          <Stack $w={36} $a="center"><T $mb={0} $ls={-0.5}>ENG</T><T $mb={0} $ls={-0.4}>IN</T></Stack>
          <Gap $w={20} />
          <Stroke w={1.5}><path d="M1 7.500a12.700 12.700 0 0 1 18 0M3.800 10.500a8.800 8.800 0 0 1 12.400 0M6.500 13.300a5 5 0 0 1 7 0" /><circle cx="10" cy="16" r="1.2" fill="#fff" /></Stroke>
          <Gap $w={10} />
          <Stroke w={1.4}><path d="M1 7.500h3L9 3v14l-5-4.500H1zM12 7.500a4 4 0 0 1 0 5M14.500 5a7.500 7.500 0 0 1 0 10M17 2.500a11 11 0 0 1 0 15" /></Stroke>
          <Gap $w={10} />
          <Stroke w={1.5}><path d="M7 4h9a2 2 0 0 1 2 2v4M3 9v4a2 2 0 0 0 2 2h5" /><path d="M8 6h8v4l-4 3H5l1-4z" fill="#fff" /><path d="M4 .8L1.500 5h3L3 8.500M15.500 19l-3.500-3.500q0-3 3.500-1.500 3.500-1.500 3.500 1.500z" fill="#fff" /></Stroke>
          <Grow />
          <Stack $a="flex-end"><T $mb={0} $ls={-0.4}>19:57</T><T $mb={0} $ls={0.13}>14-08-2025</T></Stack>
          <Gap $w={24} />
        </Tray>
      </Taskbar>

      <Floating>
        <svg width="58" height="58" viewBox="0 0 58 58">
          <path d="M29 16h12l-9 14q-4 6-10 6h-4q-3-4 1-9z" fill="#2d4a68" />
          <path d="M41 32q2 6-3 12l-7 12-14-1 12-18q4-5 12-5z" fill="#3a566f" />
        </svg>
      </Floating>
    </Screen>
  );
}
